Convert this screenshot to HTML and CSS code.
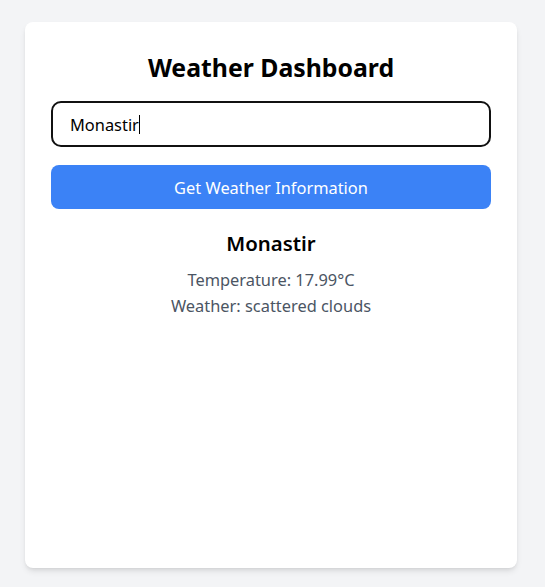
FILE: index.html
```html
<!DOCTYPE html>
<html lang="en">
<head>
<meta charset="utf-8">
<title>Weather Dashboard</title>
<link rel="stylesheet" href="styles.css">
</head>
<body>
<main class="card">
  <h1 class="title">Weather Dashboard</h1>
  <div class="field"><span class="field-text">Monastir</span><span class="caret"></span></div>
  <button class="btn" type="button">Get Weather Information</button>
  <section class="result">
    <h2 class="city">Monastir</h2>
    <p class="line">Temperature: 17.99°C</p>
    <p class="line">Weather: scattered clouds</p>
  </section>
</main>
</body>
</html>
```
FILE: styles.css
```css
* { box-sizing: border-box; }
html, body { height: 100%; }
body {
  margin: 0;
  background: #f3f4f6;
  font-family: "Noto Sans", "Open Sans", sans-serif;
  padding: 22px 28px 19px 25px;
  display: flex;
}
.card {
  flex: 1;
  background: #fff;
  border-radius: 8px;
  box-shadow: 0 4px 6px -1px rgba(0,0,0,0.1), 0 2px 4px -2px rgba(0,0,0,0.1);
  padding: 29px 26px;
  display: flex;
  flex-direction: column;
}
.title {
  margin: 0 0 18px;
  font-size: 24.8px;
  line-height: 32px;
  font-weight: 700;
  text-align: center;
  color: #000;
}
.field {
  height: 46px;
  border: 2px solid #111;
  border-radius: 10px;
  padding: 0 17px;
  display: flex;
  align-items: center;
  font-size: 16.4px;
  color: #000;
}
.caret {
  width: 1px;
  height: 19px;
  background: #000;
}
.btn {
  margin-top: 18px;
  height: 44px;
  border: 0;
  border-radius: 8px;
  background: #3b82f6;
  color: #fff;
  font-family: inherit;
  font-size: 16.4px;
}
.result {
  margin-top: 20px;
  text-align: center;
}
.city {
  margin: 0 0 10px;
  font-size: 20.4px;
  line-height: 28px;
  font-weight: 600;
  color: #000;
}
.line {
  margin: 0;
  font-size: 16.4px;
  line-height: 26px;
  color: #4b5563;
}
```
